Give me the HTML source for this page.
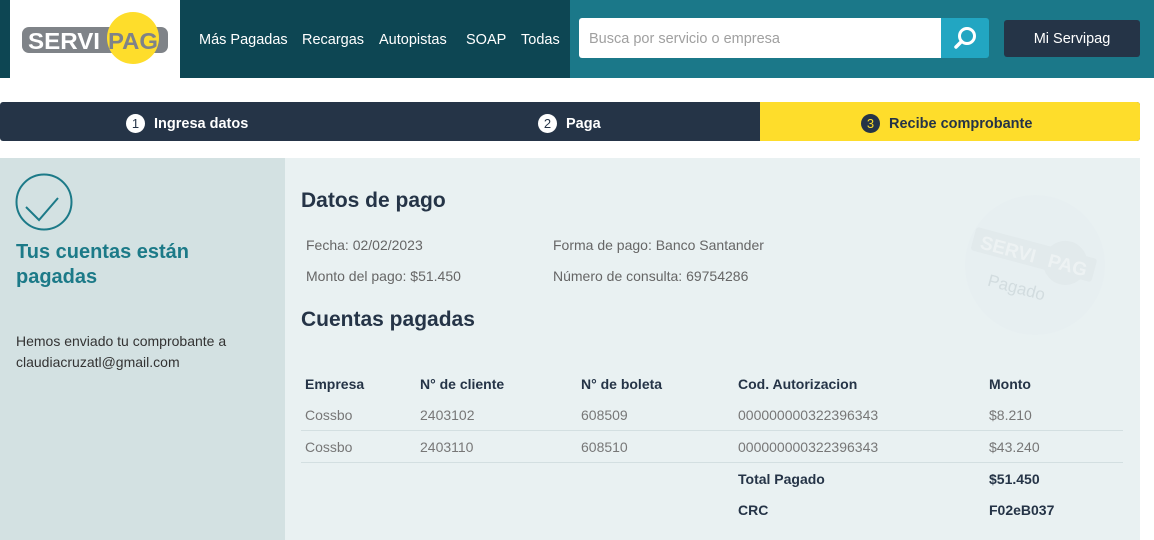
<!DOCTYPE html>
<html><head><meta charset="utf-8"><style>
*{margin:0;padding:0;box-sizing:border-box}
body{width:1154px;height:540px;background:#fff;font-family:"Liberation Sans",sans-serif;position:relative;overflow:hidden}
.a{position:absolute;white-space:nowrap}
</style></head><body>
<div class="a" style="left:0;top:0;width:570px;height:78px;background:#0d4653"></div>
<div class="a" style="left:570px;top:0;width:584px;height:78px;background:#1b7889"></div>
<div class="a" style="left:10px;top:0;width:170px;height:78px;background:#fff"></div>
<svg class="a" style="left:0;top:0" width="180" height="78" viewBox="0 0 180 78">
<rect x="22" y="27" width="146" height="26" rx="7" fill="#7f8388"/>
<circle cx="133" cy="38" r="26" fill="#fedd2b"/>
<text x="28" y="49" font-family="Liberation Sans" font-weight="bold" font-size="23" fill="#fff" textLength="72" lengthAdjust="spacingAndGlyphs">SERVI</text>
<text x="108" y="49" font-family="Liberation Sans" font-weight="bold" font-size="23" fill="#7f8388" textLength="50" lengthAdjust="spacingAndGlyphs">PAG</text>
</svg>
<div class="a" style="left:199px;top:32px;font-size:14.5px;color:#fff">Más Pagadas</div>
<div class="a" style="left:302px;top:32px;font-size:14.5px;color:#fff">Recargas</div>
<div class="a" style="left:379px;top:32px;font-size:14.5px;color:#fff">Autopistas</div>
<div class="a" style="left:466px;top:32px;font-size:14.5px;color:#fff">SOAP</div>
<div class="a" style="left:521px;top:32px;font-size:14.5px;color:#fff">Todas</div>
<div class="a" style="left:579px;top:18px;width:362px;height:40px;background:#fff;border-radius:3px 0 0 3px"></div>
<div class="a" style="left:589px;top:31px;font-size:14.5px;color:#a0a0a0">Busca por servicio o empresa</div>
<div class="a" style="left:941px;top:18px;width:48px;height:40px;background:#22a6c2;border-radius:0 3px 3px 0"></div>
<svg class="a" style="left:952px;top:26px" width="26" height="24" viewBox="0 0 26 24"><circle cx="15" cy="10" r="7.5" fill="none" stroke="#fff" stroke-width="3"/><path d="M9.5 15.5 L4 21" stroke="#fff" stroke-width="3.5" stroke-linecap="round"/></svg>
<div class="a" style="left:1004px;top:20px;width:136px;height:37px;background:#253447;border-radius:3px;color:#fff;font-size:14.5px;text-align:center;line-height:39px">Mi Servipag</div>

<div class="a" style="left:0;top:102px;width:1140px;height:39px;background:#253447;border-radius:3px"></div>
<div class="a" style="left:760px;top:102px;width:380px;height:39px;background:#fedd2b;border-radius:0 3px 3px 0"></div>
<div class="a" style="left:126px;top:114px;width:19px;height:19px;border-radius:50%;background:#fff;color:#253447;font-size:13px;text-align:center;line-height:19px">1</div>
<div class="a" style="left:154px;top:116px;font-size:14.5px;font-weight:bold;color:#fff">Ingresa datos</div>
<div class="a" style="left:538px;top:114px;width:19px;height:19px;border-radius:50%;background:#fff;color:#253447;font-size:13px;text-align:center;line-height:19px">2</div>
<div class="a" style="left:566px;top:116px;font-size:14.5px;font-weight:bold;color:#fff">Paga</div>
<div class="a" style="left:861px;top:114px;width:19px;height:19px;border-radius:50%;background:#253447;color:#fedd2b;font-size:13px;text-align:center;line-height:19px">3</div>
<div class="a" style="left:889px;top:116px;font-size:14.5px;font-weight:bold;color:#253447">Recibe comprobante</div>

<div class="a" style="left:0;top:158px;width:285px;height:382px;background:#d3e1e2"></div>
<div class="a" style="left:285px;top:158px;width:855px;height:382px;background:#e9f1f2"></div>
<svg class="a" style="left:15px;top:173px" width="58" height="58" viewBox="0 0 58 58"><circle cx="29" cy="29" r="27.5" fill="none" stroke="#1c7a88" stroke-width="2"/><path d="M11 34 L24 47 L43 25" fill="none" stroke="#1c7a88" stroke-width="2"/></svg>
<div class="a" style="left:16px;top:240px;font-size:20px;font-weight:bold;color:#1c7a88;line-height:25px">Tus cuentas están<br>pagadas</div>
<div class="a" style="left:16px;top:331px;font-size:14px;color:#333;line-height:21px">Hemos enviado tu comprobante a<br>claudiacruzatl@gmail.com</div>

<svg class="a" style="left:950px;top:185px" width="170" height="155" viewBox="0 0 170 155">
<circle cx="85" cy="80" r="70" fill="#e7eff1"/>
<g transform="rotate(15 85 75)"><rect x="20" y="58" width="125" height="24" rx="3" fill="#e2eaec"/><circle cx="115" cy="70" r="22" fill="#e2eaec"/>
<text x="28" y="78" font-weight="bold" font-size="19" fill="#edf2f3" font-family="Liberation Sans">SERVI</text><text x="98" y="78" font-weight="bold" font-size="19" fill="#edf2f3" font-family="Liberation Sans">PAG</text>
<text x="45" y="112" font-size="17" fill="#d2dcdf" font-family="Liberation Sans">Pagado</text></g>
</svg>

<div class="a" style="left:301px;top:189px;font-size:21px;font-weight:bold;color:#253447">Datos de pago</div>
<div class="a" style="left:306px;top:237px;font-size:14px;color:#666">Fecha: 02/02/2023</div>
<div class="a" style="left:553px;top:237px;font-size:14px;color:#666">Forma de pago: Banco Santander</div>
<div class="a" style="left:306px;top:268px;font-size:14px;color:#666">Monto del pago: $51.450</div>
<div class="a" style="left:553px;top:268px;font-size:14px;color:#666">Número de consulta: 69754286</div>
<div class="a" style="left:301px;top:308px;font-size:21px;font-weight:bold;color:#253447">Cuentas pagadas</div>

<div class="a" style="left:305px;top:376px;font-size:14px;font-weight:bold;color:#253447">Empresa</div>
<div class="a" style="left:420px;top:376px;font-size:14px;font-weight:bold;color:#253447">N° de cliente</div>
<div class="a" style="left:581px;top:376px;font-size:14px;font-weight:bold;color:#253447">N° de boleta</div>
<div class="a" style="left:738px;top:376px;font-size:14px;font-weight:bold;color:#253447">Cod. Autorizacion</div>
<div class="a" style="left:989px;top:376px;font-size:14px;font-weight:bold;color:#253447">Monto</div>
<div class="a" style="left:305px;top:407px;font-size:14px;color:#777">Cossbo</div>
<div class="a" style="left:420px;top:407px;font-size:14px;color:#777">2403102</div>
<div class="a" style="left:581px;top:407px;font-size:14px;color:#777">608509</div>
<div class="a" style="left:738px;top:407px;font-size:14px;color:#777">000000000322396343</div>
<div class="a" style="left:989px;top:407px;font-size:14px;color:#777">$8.210</div>
<div class="a" style="left:301px;top:430px;width:822px;height:1px;background:#d3dfe1"></div>
<div class="a" style="left:305px;top:439px;font-size:14px;color:#777">Cossbo</div>
<div class="a" style="left:420px;top:439px;font-size:14px;color:#777">2403110</div>
<div class="a" style="left:581px;top:439px;font-size:14px;color:#777">608510</div>
<div class="a" style="left:738px;top:439px;font-size:14px;color:#777">000000000322396343</div>
<div class="a" style="left:989px;top:439px;font-size:14px;color:#777">$43.240</div>
<div class="a" style="left:301px;top:462px;width:822px;height:1px;background:#d3dfe1"></div>
<div class="a" style="left:738px;top:471px;font-size:14px;font-weight:bold;color:#253447">Total Pagado</div>
<div class="a" style="left:989px;top:471px;font-size:14px;font-weight:bold;color:#253447">$51.450</div>
<div class="a" style="left:738px;top:502px;font-size:14px;font-weight:bold;color:#253447">CRC</div>
<div class="a" style="left:989px;top:502px;font-size:14px;font-weight:bold;color:#253447">F02eB037</div>
</body></html>
